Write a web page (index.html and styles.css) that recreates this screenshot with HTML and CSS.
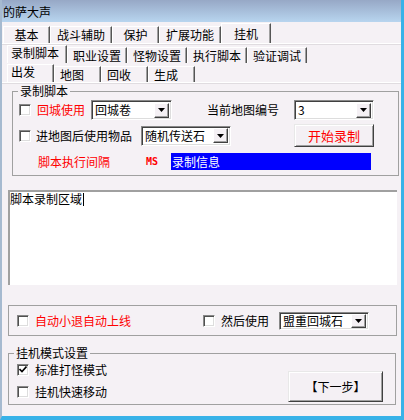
FILE: index.html
```html
<!DOCTYPE html>
<html lang="zh-CN">
<head>
  <meta charset="UTF-8">
  <title>的萨大声</title>
  <link rel="stylesheet" href="styles.css">
</head>
<body>
  <div class="window">
    <!-- 标题栏 -->
    <div class="titlebar">的萨大声</div>

    <!-- 一级标签 -->
    <div class="tabs tabs-main">
      <span class="tab">基本</span>
      <span class="tab">战斗辅助</span>
      <span class="tab">保护</span>
      <span class="tab">扩展功能</span>
      <span class="tab active">挂机</span>
    </div>

    <!-- 二级标签 -->
    <div class="tabs tabs-sub">
      <span class="tab active">录制脚本</span>
      <span class="tab">职业设置</span>
      <span class="tab">怪物设置</span>
      <span class="tab">执行脚本</span>
      <span class="tab">验证调试</span>
    </div>

    <!-- 三级标签 -->
    <div class="tabs tabs-third">
      <span class="tab active">出发</span>
      <span class="tab">地图</span>
      <span class="tab">回收</span>
      <span class="tab">生成</span>
    </div>

    <!-- 录制脚本 -->
    <fieldset class="group group-record">
      <legend>录制脚本</legend>

      <div class="row row-a">
        <span class="box"></span>
        <span class="label red">回城使用</span>
        <span class="combo combo-back"><span class="val">回城卷</span><span class="drop"><svg width="7" height="4" viewBox="0 0 7 4"><polygon points="0,0 7,0 3.5,4" fill="#000"/></svg></span></span>
        <span class="label map-label">当前地图编号</span>
        <span class="combo combo-map"><span class="val">3</span><span class="drop"><svg width="7" height="4" viewBox="0 0 7 4"><polygon points="0,0 7,0 3.5,4" fill="#000"/></svg></span></span>
      </div>

      <div class="row row-b">
        <span class="box"></span>
        <span class="label">进地图后使用物品</span>
        <span class="combo combo-item"><span class="val">随机传送石</span><span class="drop"><svg width="7" height="4" viewBox="0 0 7 4"><polygon points="0,0 7,0 3.5,4" fill="#000"/></svg></span></span>
        <span class="btn btn-start">开始录制</span>
      </div>

      <div class="row row-c">
        <span class="label red interval">脚本执行间隔</span>
        <span class="ms">MS</span>
        <span class="info">录制信息</span>
      </div>
    </fieldset>

    <!-- 脚本录制区域 -->
    <div class="script-area">脚本录制区域<span class="caret"></span></div>

    <!-- 小退设置 -->
    <div class="group group-relog">
      <div class="row">
        <span class="box"></span>
        <span class="label red">自动小退自动上线</span>
        <span class="box then-box"></span>
        <span class="label">然后使用</span>
        <span class="combo combo-stone"><span class="val">盟重回城石</span><span class="drop"><svg width="7" height="4" viewBox="0 0 7 4"><polygon points="0,0 7,0 3.5,4" fill="#000"/></svg></span></span>
      </div>
    </div>

    <!-- 挂机模式设置 -->
    <fieldset class="group group-mode">
      <legend>挂机模式设置</legend>
      <div class="mode-body">
        <div class="mode-list">
          <div class="check-row">
            <span class="box"><svg width="8" height="7" viewBox="0 0 8 7"><polyline points="0.5,3 3,5.5 7.5,0.5" fill="none" stroke="#000" stroke-width="1.6"/></svg></span>
            <span class="label">标准打怪模式</span>
          </div>
          <div class="check-row">
            <span class="box"></span>
            <span class="label">挂机快速移动</span>
          </div>
        </div>
        <span class="btn btn-next">【下一步】</span>
      </div>
    </fieldset>
  </div>
</body>
</html>
```

FILE: styles.css
```css
* {
  box-sizing: border-box;
}

html, body {
  margin: 0;
  padding: 0;
  background: #f5f1f5;
  font-family: "Noto Sans CJK SC", "Noto Sans", sans-serif;
  font-size: 12px;
  color: #000;
}

/* 窗口外框 */
.window {
  width: 404px;
  height: 420px;
  border-left: 2px solid #a6bad0;
  border-right: 3px solid #38b2e8;
  border-bottom: 4px solid #38b2e8;
  overflow: hidden;
}

.titlebar {
  height: 22px;
  line-height: 24px;
  padding-left: 1px;
  font-size: 12px;
  background: linear-gradient(#97a8c6, #b8d5ef);
}

/* ===== 标签 ===== */
.tabs {
  display: flex;
  align-items: flex-end;
}

.tab {
  border-left: 1px solid #fff;
  border-top: 1px solid #fff;
  border-right: 1px solid #555;
  box-shadow: inset -1px 0 #a0a0a0;
  white-space: nowrap;
}

.tabs-main {
  height: 22px;
  padding-left: 1px;
  border-bottom: 1px solid #fff;
  box-shadow: 0 1px #e0dce0;
}

.tabs-main .tab {
  height: 17px;
  line-height: 16px;
  min-width: 47px;
  padding: 0 6px;
  text-align: center;
}

.tabs-main .tab.active {
  height: 20px;
  width: 50px;
  line-height: 20px;
}

.tabs-sub {
  height: 19px;
  padding-left: 5px;
}

.tabs-sub .tab {
  height: 16px;
  line-height: 15px;
  padding: 0 5px;
}

.tabs-sub .tab.active {
  height: 18px;
  line-height: 14px;
  padding: 0 7px 0 3px;
}

.tabs-third {
  height: 20px;
  padding-left: 5px;
  border-bottom: 1px solid #fff;
  box-shadow: 0 1px #e0dce0;
}

.tabs-third .tab {
  width: 47px;
  height: 16px;
  line-height: 15px;
  padding-left: 5px;
}

.tabs-third .tab.active {
  height: 18px;
  line-height: 13px;
  padding-left: 3px;
}

/* ===== 分组框 ===== */
.group {
  margin: 0;
  padding: 0;
  border: 1px solid #a0a0a0;
  min-width: 0;
}

.group legend {
  margin-left: 5px;
  padding: 0 2px;
  line-height: 12px;
}

.group-record {
  margin: 2px 2px 0 10px;
  padding: 3px 0 5px;
}

.row {
  display: flex;
  align-items: center;
}

.row-a {
  height: 20px;
  padding-left: 6px;
}

.row-b {
  height: 23px;
  margin-top: 4px;
  padding-left: 6px;
}

.row-c {
  height: 17px;
  margin-top: 6px;
}

.label {
  white-space: nowrap;
  line-height: 14px;
}

.red {
  color: #f00;
}

/* 复选框 */
.box {
  flex: none;
  width: 12px;
  height: 12px;
  background: #fff;
  border: 1px solid;
  border-color: #888 #fff #fff #888;
  box-shadow: inset 1px 1px #505050, inset -1px -1px #ddd;
  display: flex;
  align-items: center;
  justify-content: center;
}

.box + .label {
  margin-left: 6px;
}

.row-b .box + .label {
  margin-left: 5px;
}

/* 下拉框 */
.combo {
  flex: none;
  display: flex;
  align-items: center;
  height: 20px;
  padding: 2px 2px 2px 3px;
  background: #fff;
  border: 1px solid;
  border-color: #888 #fff #fff #888;
  box-shadow: inset 1px 1px #404040, inset -1px -1px #ddd;
  white-space: nowrap;
}

.combo .val {
  flex: 1;
  line-height: 14px;
}

.combo .drop {
  width: 15px;
  height: 15px;
  background: #f4f0f4;
  border: 1px solid;
  border-color: #fff #404040 #404040 #fff;
  box-shadow: inset -1px -1px #a0a0a0;
  display: flex;
  align-items: center;
  justify-content: center;
}

.combo-back {
  width: 81px;
  margin-left: 6px;
}

.map-label {
  margin-left: 35px;
}

.combo-map {
  width: 80px;
  margin-left: 15px;
}

.combo-item {
  width: 90px;
  margin-left: 9px;
}

/* 按钮 */
.btn {
  flex: none;
  display: flex;
  align-items: center;
  justify-content: center;
  background: #f4f0f4;
  border: 1px solid;
  border-color: #e8e8e8 #404040 #404040 #e8e8e8;
  box-shadow: inset 1px 1px #fff, inset -1px -1px #a0a0a0;
  white-space: nowrap;
}

.btn-start {
  width: 80px;
  height: 23px;
  margin-left: 63px;
  color: #f00;
  font-size: 13px;
}

.interval {
  margin-left: 25px;
}

.ms {
  margin-left: 36px;
  color: #f00;
  font-family: "DejaVu Sans Mono", monospace;
  font-size: 10px;
  font-weight: bold;
}

.info {
  width: 200px;
  height: 17px;
  margin-left: 13px;
  padding-left: 1px;
  line-height: 17px;
  background: #00f;
  color: #fff;
}

/* 脚本录制区域 */
.script-area {
  height: 95px;
  margin: 14px 4px 0 6px;
  background: #fff;
  border-top: 2px solid #a0a0a0;
  border-left: 2px solid #a0a0a0;
  line-height: 14px;
}

.caret {
  display: inline-block;
  width: 1px;
  height: 13px;
  margin-left: 1px;
  background: #000;
  vertical-align: -2px;
}

/* 小退设置 */
.group-relog {
  margin: 20px 4px 0 6px;
  height: 31px;
  padding-top: 5px;
}

.group-relog .row {
  height: 19px;
  padding-left: 8px;
}

.then-box {
  margin-left: 72px;
}

.combo-stone {
  width: 90px;
  height: 18px;
  margin-left: 10px;
  padding: 1px 2px 1px 3px;
}

.combo-stone .drop {
  height: 14px;
}

/* 挂机模式设置 */
.group-mode {
  margin: 11px 5px 0 6px;
  padding: 0 0 2px;
}

.mode-body {
  display: flex;
}

.mode-list {
  padding: 4px 0 0 8px;
}

.check-row {
  display: flex;
  align-items: center;
  height: 13px;
}

.check-row + .check-row {
  margin-top: 9px;
}

.btn-next {
  width: 95px;
  height: 31px;
  margin: 12px 12px 0 auto;
  font-size: 12px;
}
```
